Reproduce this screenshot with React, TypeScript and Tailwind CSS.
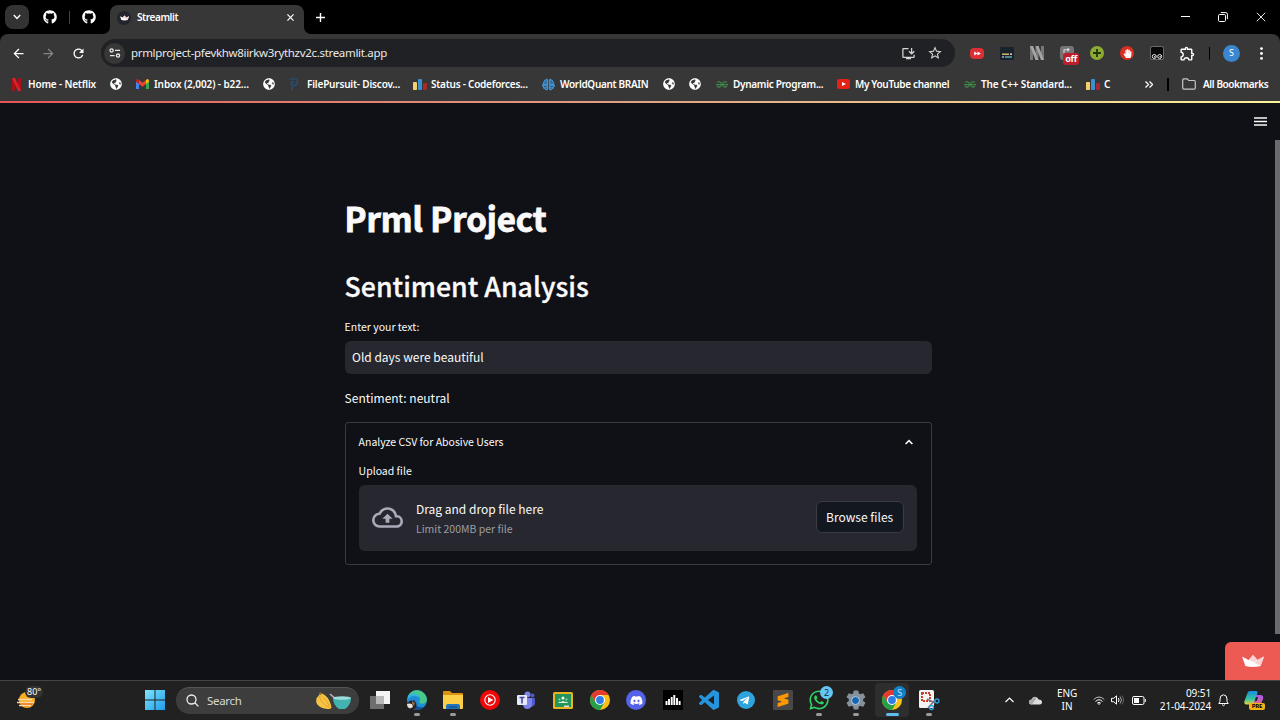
import React from "react";
import { FaGithub, FaDiscord, FaTelegramPlane, FaWhatsapp, FaGlobeAmericas, FaBrain, FaHandPaper } from "react-icons/fa";
import { BiLogoVisualStudio } from "react-icons/bi";
import { SiSublimetext } from "react-icons/si";
import { MdInstallDesktop, MdStarBorder, MdOutlineExtension, MdOutlineCloudUpload, MdArrowBack, MdArrowForward, MdRefresh, MdSettings } from "react-icons/md";

type Kids = { children?: React.ReactNode };

const Crown = ({ className }: { className: string }) => (
  <svg viewBox="0 0 22 12" className={className}>
    <path d="M0 1.6 6.6 5 11 0l4.4 5L22 1.6 18.6 11q-7.6 2-15.2 0z" fill="#fff" />
    <path d="M11 0l4.4 5-2.6 2.6L7 5z" fill="#fbd3d3" />
    <path d="M22 1.6 15.4 5 13 8l5.6 3z" fill="#fbd3d3" />
  </svg>
);

const Bars = () => (
  <svg viewBox="0 0 14 12" className="h-3 w-[14px]">
    <rect x="0" y="4" width="4" height="8" rx=".8" fill="#f6cf6b" />
    <rect x="5" y="1" width="4" height="11" rx=".8" fill="#3a8fd0" />
    <rect x="10" y="5" width="4" height="7" rx=".8" fill="#a32b2b" />
  </svg>
);

const Gfg = () => (
  <svg viewBox="0 0 12 7" className="h-[7px] w-3" fill="none" stroke="#3f8a47" strokeWidth="1.1">
    <path d="M0 3.6h12M1 1.4C3 .2 5.4 1 5.4 3.5S3 6.8 1 5.3M11 1.4C9 .2 6.6 1 6.6 3.5S9 6.8 11 5.3" />
  </svg>
);

const Globe = () => <FaGlobeAmericas className="size-3 text-white" />;

const Chrome = () => (
  <svg viewBox="0 0 20 20" className="size-5">
    <circle cx="10" cy="10" r="10" fill="#fbc116" />
    <path d="M1.34 5A10 10 0 0 0 10 20l4.33-7.5L10 10 5.67 12.5z" fill="#269f4b" />
    <path d="M1.34 5A10 10 0 0 1 18.66 5H10L5.67 12.5z" fill="#e33b2e" />
    <circle cx="10" cy="10" r="5" fill="#fff" />
    <circle cx="10" cy="10" r="3.9" fill="#2f7de9" />
  </svg>
);

function Bookmark({ cell, slot, icon, children }: Kids & { cell: string; slot: string; icon: React.ReactNode }) {
  return (
    <div className={"flex h-full shrink-0 items-center " + cell}>
      <span className={"flex shrink-0 items-center " + slot}>{icon}</span>
      <span className="whitespace-pre">{children}</span>
    </div>
  );
}

function TitleBar() {
  return (
    <div className="flex h-[34px] items-center bg-black">
      <div className="ml-[5px] flex size-[24px] items-center justify-center rounded-[8px] bg-[#333]">
        <svg viewBox="0 0 8 6" className="h-[6px] w-2" fill="none" stroke="#fff" strokeWidth="1.4"><path d="m.8 1 3.2 3.4L7.2 1" /></svg>
      </div>
      <FaGithub className="ml-[14px] size-[14px] text-white" />
      <div className="ml-3 h-[13px] w-px bg-[#444]" />
      <FaGithub className="ml-3 size-[14px] text-white" />
      <div className="ml-[7px] flex h-full w-[208px] items-end">
        <svg viewBox="0 0 7 7" className="size-[7px]"><path d="M7 0v7H0a7 7 0 0 0 7-7" fill="#373737" /></svg>
        <div className="flex h-[29px] w-[194px] items-center rounded-t-[8px] bg-[#373737] pb-1">
          <span className="ml-[7px] flex size-[14px] items-center justify-center rounded-full bg-[#22252d]"><Crown className="h-[6px] w-[9px]" /></span>
          <span className="ml-[6px] w-[150px] text-[10px] font-semibold tracking-[-0.4px] text-white">Streamlit</span>
          <svg viewBox="0 0 8 8" className="size-[7px]" stroke="#fff" strokeWidth="1.4"><path d="m.5.5 7 7m0-7-7 7" /></svg>
        </div>
        <svg viewBox="0 0 7 7" className="size-[7px]"><path d="M0 0v7h7a7 7 0 0 1-7-7" fill="#373737" /></svg>
      </div>
      <svg viewBox="0 0 9 9" className="ml-[5px] size-[9px]" stroke="#fff" strokeWidth="1.4"><path d="M4.5 0v9M0 4.5h9" /></svg>
      <div className="ml-auto flex items-center pb-px pr-[14px]">
        <svg viewBox="0 0 9 9" className="size-[9px]" stroke="#fff"><path d="M0 4.5h9" /></svg>
        <svg viewBox="0 0 10 10" className="ml-[28px] size-[10px]" fill="none" stroke="#fff"><rect x=".5" y="2.5" width="7" height="7" rx="1.2" /><path d="M2.8.6h5q1.6 0 1.6 1.6v5" /></svg>
        <svg viewBox="0 0 10 10" className="ml-[28px] size-[10px]" stroke="#fff" strokeWidth=".9"><path d="m.8.8 8.4 8.4m0-8.4L.8 9.2" /></svg>
      </div>
    </div>
  );
}

function Slot({ children }: Kids) {
  return <div className="flex w-[30px] shrink-0 items-center justify-center">{children}</div>;
}

function Toolbar() {
  return (
    <div className="flex h-[38px] items-center rounded-t-[8px] bg-[#373737]">
      <div className="flex w-[101px] items-center pl-[3px] text-white">
        <Slot><MdArrowBack className="size-[15px]" /></Slot>
        <Slot><MdArrowForward className="size-[15px] text-[#858585]" /></Slot>
        <Slot><MdRefresh className="size-[15px]" /></Slot>
      </div>
      <div className="flex h-7 w-[854px] items-center rounded-full bg-[#202124]">
        <div className="ml-[3px] flex size-[21px] items-center justify-center rounded-full bg-[#373737]">
          <svg viewBox="0 0 12 10" className="h-[10px] w-3" fill="none" stroke="#e8e8e8" strokeWidth="1.3">
            <circle cx="2.6" cy="2.4" r="1.6" /><path d="M6 2.4h5M1 7.6h4.6" /><circle cx="9" cy="7.6" r="1.6" />
          </svg>
        </div>
        <span className="ml-[6px] w-[762px] text-[11.5px] tracking-[-0.32px] text-[#e8e8e8]">prmlproject-pfevkhw8iirkw3rythzv2c.streamlit.app</span>
        <span className="flex w-[30px] justify-center"><MdInstallDesktop className="size-[15px] text-[#d5d5d5]" /></span>
        <span className="flex w-[23px] justify-center"><MdStarBorder className="size-[16px] text-[#d5d5d5]" /></span>
      </div>
      <div className="ml-[7px] flex h-full items-center">
        <Slot><span className="flex h-[11px] w-[14px] items-center justify-center rounded-[4px] bg-[#d92f35]"><svg viewBox="0 0 8 6" className="h-[5px] w-[7px]" fill="#fff"><path d="m0 .5 4 2.5-4 2.5zM4 .5 8 3 4 5.5z" /></svg></span></Slot>
        <Slot><svg viewBox="0 0 14 13" className="h-[13px] w-[14px]"><rect width="14" height="13" rx="1" fill="#18232e" /><path d="M2 7.2h7" stroke="#e2c46b" strokeWidth="1.4" /><path d="M10 7.2h2M2 10h2" stroke="#fff" strokeWidth="1.2" /><path d="M5 10h7" stroke="#6ed0d1" strokeWidth="1.2" /></svg></Slot>
        <Slot><svg viewBox="0 0 14 14" className="size-[14px]"><path d="M0 0h3v14H0zM5.5 0h3v14h-3zM11 0h3v14h-3z" fill="#777" /><path d="M0 0h3l5.500 14h-3zM5.500 0h3L14 14h-3z" fill="#a4a4a4" /></svg></Slot>
        <Slot>
          <span className="relative flex size-[14px] items-center justify-center rounded-[3px] bg-[#747474]">
            <svg viewBox="0 0 9 7" className="mb-[5px] h-[6px] w-2" fill="none" stroke="#ddd" strokeWidth="1.2"><path d="M1 6V2h6M5 0l2 2-2 2" /></svg>
            <span className="absolute left-[3px] top-[7px] flex h-[12px] w-4 items-center justify-center rounded-[3px] bg-[#bd1f2a] text-[9px] font-bold tracking-[-0.3px] text-white">off</span>
          </span>
        </Slot>
        <Slot><svg viewBox="0 0 14 14" className="size-[14px]"><circle cx="7" cy="7" r="7" fill="#8dab32" /><path d="M7 3v8M3 7h8" stroke="#24330b" strokeWidth="1.8" /></svg></Slot>
        <Slot><span className="flex size-[14px] items-center justify-center rounded-full bg-[#dd2e22]"><FaHandPaper className="size-[9px] text-white" /></span></Slot>
        <Slot><svg viewBox="0 0 14 14" className="size-[14px]"><rect x=".4" y=".4" width="13.2" height="13.2" rx="2" fill="#080808" stroke="#8a8a8a" strokeWidth=".8" /><g fill="none" stroke="#fff" strokeWidth=".9"><circle cx="4.3" cy="10.5" r="2" /><circle cx="9.7" cy="10.5" r="2" /></g><circle cx="4.7" cy="10.7" r=".7" fill="#fff" /><circle cx="10.1" cy="10.7" r=".7" fill="#fff" /></svg></Slot>
        <Slot><svg viewBox="0 0 24 24" className="size-[17px] text-white"><MdOutlineExtension size={24} /></svg></Slot>
        <div className="ml-[7px] h-[13px] w-px bg-black" />
        <div className="ml-[13px] flex size-[17px] items-center justify-center rounded-full bg-[#3b86d1] text-[9px] text-white">S</div>
        <svg viewBox="0 0 3 13" className="ml-[20px] h-[13px] w-[3px]" fill="#fff"><circle cx="1.5" cy="1.6" r="1.4" /><circle cx="1.5" cy="6.5" r="1.4" /><circle cx="1.5" cy="11.4" r="1.4" /></svg>
      </div>
    </div>
  );
}

function Bookmarks() {
  return (
    <div className="flex h-[29px] items-center bg-[#373737] pb-[5px] pl-3 text-[10px] font-semibold tracking-[-0.24px] text-white">
      <Bookmark cell="w-[98px]" slot="w-[16px]" icon={<svg viewBox="0 0 9 13" className="h-[13px] w-[9px]"><path d="M0 0h3v13H0zM6 0h3v13H6z" fill="#a9121a" /><path d="M0 0h3l6 13H6z" fill="#e02028" /></svg>}><span className="tracking-[-0.17px]">Home - Netflix</span></Bookmark>
      <Bookmark cell="w-[26px]" slot="w-3" icon={<Globe />} />
      <Bookmark cell="w-[127px]" slot="w-[18px]" icon={<svg viewBox="0 0 13 10" className="h-[10px] w-[13px]"><path d="M0 2v8h3V4z" fill="#4285f4" /><path d="M13 2v8h-3V4z" fill="#34a853" /><path d="M3 1v4l3.5 2.7L10 5V1L6.5 3.7z" fill="#ea4335" /><path d="M0 1.8Q0 0 1.8.1L3 1v4L0 2.8z" fill="#c5221f" /><path d="M13 1.8Q13 0 11.2.1L10 1v4l3-2.2z" fill="#fbbc04" /></svg>}><span className="tracking-[-0.1px]">Inbox (2,002) - b22...</span></Bookmark>
      <Bookmark cell="w-[26px]" slot="w-3" icon={<Globe />} />
      <Bookmark cell="w-[124px]" slot="w-[18px]" icon={<svg viewBox="0 0 10 13" className="h-[13px] w-[10px]" fill="none" stroke="#1f5688" strokeWidth="1.2"><path d="M0 1h6q3 .4 2.5 3.2T5 7.5H3.5l-1 5M1.5 4H6M2 7l1-3" /></svg>}><span className="tracking-[-0.19px]">FilePursuit- Discov...</span></Bookmark>
      <Bookmark cell="w-[129px]" slot="w-[18px]" icon={<Bars />}>Status - Codeforces...</Bookmark>
      <Bookmark cell="w-[121px]" slot="w-[18px]" icon={<span className="relative flex"><FaBrain className="size-[13px] text-[#3d92d3]" /><svg viewBox="0 0 13 13" className="absolute inset-0 size-[13px]" fill="none" stroke="#373737" strokeWidth=".7"><path d="M2 5h2.500M2 8.500h2l1-1M4 2.500v2M11 5H8.500M11 8.500H9l-1-1M9 2.500v2M4 11V9.500M9 11V9.500" /></svg></span>}><span className="tracking-[-0.32px]">WorldQuant BRAIN</span></Bookmark>
      <Bookmark cell="w-[26px]" slot="w-3" icon={<Globe />} />
      <Bookmark cell="w-[27px]" slot="w-3" icon={<Globe />} />
      <Bookmark cell="w-[121px]" slot="w-[17px]" icon={<Gfg />}><span className="tracking-[-0.3px]">Dynamic Program...</span></Bookmark>
      <Bookmark cell="w-[127px]" slot="w-[18px]" icon={<svg viewBox="0 0 13 10" className="h-[10px] w-[13px]"><rect width="13" height="10" rx="2.5" fill="#e62117" /><path d="m5 3 4 2-4 2z" fill="#fff" /></svg>}><span className="tracking-[-0.34px]">My YouTube channel</span></Bookmark>
      <Bookmark cell="w-[122px]" slot="w-[17px]" icon={<Gfg />}><span className="tracking-[-0.14px]">The C++ Standard...</span></Bookmark>
      <Bookmark cell="w-[59px]" slot="w-[18px]" icon={<Bars />}>C</Bookmark>
      <svg viewBox="0 0 8 7" className="h-[7px] w-2" fill="none" stroke="#fff" strokeWidth="1.3"><path d="m.5.5 3 3-3 3m4-6 3 3-3 3" /></svg>
      <div className="ml-[14px] h-[13px] w-[2px] bg-black" />
      <svg viewBox="0 0 14 12" className="ml-[13px] h-3 w-[14px]" fill="none" stroke="#c8c8c8" strokeWidth="1.2"><path d="M.7 10V2Q.7.8 1.9.8h3.3l1.5 1.7h5.400q1.200 0 1.200 1.200V10q0 1.200-1.200 1.200H1.900Q.7 11.200.7 10z" /></svg>
      <span className="ml-[7px] whitespace-pre tracking-[-0.4px]">All Bookmarks</span>
    </div>
  );
}

function StreamlitPage() {
  return (
    <main className="relative flex h-[577px] flex-col bg-[#101116] font-['Noto_Sans_CJK_SC','Noto_Sans_CJK_JP',sans-serif] text-[#fafafa]">
      <div className="flex h-[37px] items-center justify-end pr-[13px]">
        <svg viewBox="0 0 13 9" className="h-[9px] w-[13px]" stroke="#fafafa" strokeWidth="1.3"><path d="M0 1h13M0 4.5h13M0 8h13" /></svg>
      </div>
      <div className="ml-[344.6px] w-[587px] pt-[58px]">
        <h1 className="h-[40px] text-[33px] font-bold leading-[40px] tracking-[-0.08px] [-webkit-text-stroke:0.9px_#fafafa]">Prml Project</h1>
        <h2 className="mt-[28px] h-[40px] text-[26.7px] font-medium leading-[40px] [-webkit-text-stroke:0.3px_#fafafa]">Sentiment Analysis</h2>
        <div className="mt-[13px] h-[17px] text-[10.5px] leading-[16px]">Enter your text:</div>
        <div className="mt-[5px] flex h-[33px] items-center rounded-[6px] bg-[#27282f] pb-px pl-[7.4px] text-[12px]">Old days were beautiful</div>
        <p className="mt-[14px] h-5 text-[12px] leading-5">Sentiment: neutral</p>
        <section className="mt-[14px] h-[143px] rounded-[3px] border border-[#3a3b40] px-[13px]">
          <div className="flex h-[39px] items-center justify-between pb-[2px] text-[10.5px]">
            <span>Analyze CSV for Abosive Users</span>
            <svg viewBox="0 0 8 6" className="mr-[5px] h-[6px] w-2" fill="none" stroke="#fff" strokeWidth="1.5"><path d="M.6 5 4 1.6 7.4 5" /></svg>
          </div>
          <div className="mt-[1px] h-[17px] text-[10.5px] leading-[16px]">Upload file</div>
          <div className="mr-[0.6px] mt-[5px] flex h-[66px] items-center rounded-[6px] bg-[#27282f] px-[13px] pb-[2px]">
            <MdOutlineCloudUpload className="size-[31px] text-[#a9abb8]" />
            <div className="ml-[13.4px] grow pt-[3px]">
              <div className="h-5 text-[12px] leading-5">Drag and drop file here</div>
              <div className="h-5 text-[10.5px] leading-[20px] text-[#9c9da2]">Limit 200MB per file</div>
            </div>
            <button className="mr-[0.4px] h-8 w-[88px] rounded-[6px] border border-[#3a3b43] bg-[#131720] text-[12px]">Browse files</button>
          </div>
        </section>
      </div>
      <div className="absolute right-0 top-[37px] h-[494px] w-[5px] bg-[#6a6b6e]" />
      <div className="absolute bottom-0 right-0 flex h-[38px] w-[55px] items-center justify-center rounded-tl-[6px] bg-[#ec5a53]"><Crown className="h-3 w-[22px]" /></div>
    </main>
  );
}

function TaskIcon({ children, state }: Kids & { state?: "open" | "active" }) {
  return (
    <div className="relative flex h-full w-[36.6px] shrink-0 items-center justify-center">
      {state === "active" && <span className="absolute h-[34px] w-[34px] rounded-[4px] bg-[#2e2e2e]" />}
      <span className="relative flex size-5 items-center justify-center">{children}</span>
      {state === "open" && <span className="absolute bottom-[3px] h-[3px] w-[6px] rounded-full bg-[#9a9a9a]" />}
      {state === "active" && <span className="absolute bottom-[3px] h-[3px] w-[13px] rounded-full bg-[#60bdf0]" />}
    </div>
  );
}

function Taskbar() {
  return (
    <footer className="flex h-10 items-center border-t border-[#444] bg-[#212121] pb-px text-white">
      <div className="relative ml-[17px] size-5">
        <svg viewBox="0 0 20 20" className="size-5"><circle cx="10" cy="10" r="8" fill="#f9ad22" /><path d="M3 13a8 8 0 0 0 14-1z" fill="#e8700f" /><path d="M1 9.5h14M0 12.5h17M2 15.5h12" stroke="#f7d9a4" strokeWidth="1.4" /></svg>
        <span className="absolute left-[8px] top-[-4px] rounded-full bg-[#333] px-[2px] text-[9px] leading-3">80°</span>
      </div>
      <svg viewBox="0 0 20 20" className="ml-[108px] size-5">
        <defs><linearGradient id="win" x1="0" y1="0" x2="1" y2="1"><stop stopColor="#7ce5fb" /><stop offset="1" stopColor="#1f9bea" /></linearGradient></defs>
        <path d="M0 0h9.500v9.500H0zM10.500 0H20v9.500h-9.500zM0 10.500h9.500V20H0zM10.500 10.500H20V20h-9.500z" fill="url(#win)" />
      </svg>
      <div className="ml-[11px] flex h-[27px] w-[183px] items-center rounded-full border-t border-[#555] bg-[#3d3d3d]">
        <svg viewBox="0 0 13 13" className="ml-[10px] size-[13px]" fill="none" stroke="#eee" strokeWidth="1.3"><circle cx="5.5" cy="5.5" r="4.5" /><path d="m8.800 8.800 3.600 3.600" /></svg>
        <span className="ml-2 w-[108px] text-[11.5px] tracking-[-0.3px] text-[#d8d8d8]">Search</span>
        <svg viewBox="0 0 37 18" className="h-[18px] w-[37px]">
          <path d="M5 .5 7 1.500Q12 4 14 8q2 4 2.500 7.500-1 2-4 1.500Q5 16.500 2 12-.5 7 4.200 3z" fill="#f6c445" />
          <path d="M4.500 4Q5 10 14.500 16M6 3.500q5.500 3.500 9 11.500" fill="none" stroke="#dd9a2a" strokeWidth=".8" /><path d="m4.500.4 2.600.8L6 3 4 2.600z" fill="#8f6a25" />
          <path d="m15 2 7 6" stroke="#bfb6c8" strokeWidth="1.5" /><path d="M18 6h18q0 7-6 11h-6q-6-4-6-11" fill="#42b3b0" /><ellipse cx="27" cy="6" rx="9" ry="1.8" fill="#9bdedb" />
        </svg>
      </div>
      <nav className="ml-[2.7px] flex h-full items-center">
        <TaskIcon><svg viewBox="0 0 20 20" className="size-5"><path d="M6 1h14v13H6z" fill="#f3f3f3" /><path d="M0 6h14v13H0z" fill="#777" opacity=".9" /><path d="M6 6h8v8H6z" fill="#b8b8b8" /></svg></TaskIcon>
        <TaskIcon state="open"><svg viewBox="0 0 20 20" className="size-5"><circle cx="10" cy="10" r="10" fill="#1f8fd5" /><path d="M1 6A10 10 0 0 1 20 10q-1 4-6 3.600-3-.6-1-3Q14 6 8 4.500 4 4 1 6" fill="#48c98a" /><path d="M1 6Q4 2 9 4q5 2 4 6 0-4-6-4Q2 6 0 11z" fill="#36b5dc" /><path d="M8 9q-2 6 4 8 4 1 6-1-4 5-10 4-5-2-4-7z" fill="#174f94" /><circle cx="5" cy="15" r="4.500" fill="#29231f" /><path d="M0 14q2-1 5 0l1 3-3 1.500q-3-1-3-4.500" fill="#e9e2db" /><path d="m5 11 3 2-1 3-2-2z" fill="#8c6a52" /></svg></TaskIcon>
        <TaskIcon state="open"><svg viewBox="0 0 20 18" className="h-[18px] w-5"><path d="M0 1q0-1 1-1h6l2 2h10q1 0 1 1v4H0z" fill="#d9930f" /><path d="M0 4h20v13q0 1-1 1H1q-1 0-1-1z" fill="#fccf49" /><path d="M3 18v-3q0-2 2-2h10q2 0 2 2v3z" fill="#1c75bd" /><path d="M6 16h8" stroke="#0c477a" /></svg></TaskIcon>
        <TaskIcon><svg viewBox="0 0 20 20" className="size-5"><circle cx="10" cy="10" r="10" fill="#f00808" /><circle cx="10" cy="10" r="5.200" fill="none" stroke="#fff" strokeWidth="1.1" /><path d="m8 6.900 5.300 3.100L8 13.100z" fill="#fff" /></svg></TaskIcon>
        <TaskIcon><svg viewBox="0 0 20 20" className="size-5"><circle cx="16.500" cy="5.500" r="2" fill="#5059c9" /><circle cx="11.500" cy="4.500" r="3" fill="#7b83eb" /><path d="M13 8h6v6q-1 3-5 3z" fill="#5059c9" /><path d="M7 8h9v7q-1 4-5 4-3 0-4-4z" fill="#7b83eb" /><rect x="1" y="5" width="10" height="10" rx="1" fill="#e8e9fb" /><path d="M3.500 7.500h5M6 7.500v6" stroke="#4045a0" strokeWidth="1.600" /></svg></TaskIcon>
        <TaskIcon><svg viewBox="0 0 20 17" className="h-[17px] w-5"><rect width="20" height="17" rx="1.500" fill="#eab321" /><path d="M2 2h16v13H2z" fill="#22965a" /><circle cx="10" cy="6" r="1.500" fill="#fff" /><circle cx="6.500" cy="7.500" r="1" fill="#9fd3b5" /><circle cx="13.500" cy="7.500" r="1" fill="#9fd3b5" /><path d="M5 11q1.500-2 3-1 2-2 4 0 2-1 3 1z" fill="#d8eee1" /><path d="M11 13.500h5V15h-5z" fill="#ddd" /></svg></TaskIcon>
        <TaskIcon><Chrome /></TaskIcon>
        <TaskIcon><span className="flex size-5 items-center justify-center rounded-full bg-[#5562ea]"><FaDiscord className="size-[13px]" /></span></TaskIcon>
        <TaskIcon><svg viewBox="0 0 20 20" className="size-5"><path d="M0 0h20v20H0z" fill="#000" /><path d="M3.500 15v-4M6 15V9M8.700 15V7M11.300 15V5M14 15V8M16.600 15v-4" stroke="#fff" strokeWidth="1.900" /></svg></TaskIcon>
        <TaskIcon><BiLogoVisualStudio className="size-[24px] shrink-0 text-[#2694dc]" /></TaskIcon>
        <TaskIcon><span className="flex size-[18px] items-center justify-center rounded-full bg-[#2fa3dc]"><FaTelegramPlane className="mr-[2px] size-[11px]" /></span></TaskIcon>
        <TaskIcon><span className="flex size-5 items-center justify-center rounded-[1px] bg-[#484848]"><SiSublimetext className="size-[14px] text-[#ff9800]" /></span></TaskIcon>
        <TaskIcon state="open"><FaWhatsapp className="size-[22px] shrink-0 text-[#2fd467]" /><span className="absolute left-[11px] top-[-4px] flex size-[13px] items-center justify-center rounded-full bg-[#65c5f4] text-[9px] text-[#12303f]">2</span></TaskIcon>
        <TaskIcon state="open"><MdSettings className="size-[24px] shrink-0 text-[#87919a]" /><span className="absolute size-[9px] rounded-full border border-[#b9d2e8] bg-[#1764b1]" /></TaskIcon>
        <TaskIcon state="active"><Chrome /><span className="absolute left-[11px] top-[-4px] flex size-[13px] items-center justify-center rounded-full bg-[#1381c8] text-[9px] text-[#c5e5fa]">S</span></TaskIcon>
        <TaskIcon state="open"><svg viewBox="0 0 20 20" className="size-5 overflow-visible"><rect width="15" height="18" rx="1.500" fill="#f2f2f2" /><path d="M3 3h8v8H3z" fill="none" stroke="#c9402c" strokeWidth="2" strokeDasharray="2 1" /><path d="m8 9 8 4M9 18l7-8" stroke="#778" strokeWidth="1.500" /><g fill="none" stroke="#2aa0dd" strokeWidth="1.300"><circle cx="18" cy="11" r="2" /><circle cx="12.500" cy="17.500" r="2" /></g></svg></TaskIcon>
      </nav>
      <div className="ml-auto flex h-full items-center text-[10px] leading-[13px] tracking-[-0.1px]">
        <svg viewBox="0 0 9 6" className="h-[6px] w-[9px]" fill="none" stroke="#fff" strokeWidth="1.2"><path d="m.5 5 4-4 4 4" /></svg>
        <svg viewBox="0 0 13 9" className="ml-[15px] h-[9px] w-[13px]"><path d="M2.500 8.500a2.500 2.500 0 0 1 0-5Q4 0 7 1q2 .5 2.500 2.500 3.500 0 3.500 2.500t-2.500 2.500z" fill="#ddd" /><path d="M0 6q.5-2.500 3-2.500Q5 0 8 1.500L3 8.500Q0 8.500 0 6" fill="#aaa" /></svg>
        <div className="ml-[10px] w-[30px] text-center">ENG<br />IN</div>
        <svg viewBox="0 0 12 9" className="ml-[11px] h-[9px] w-3" fill="none" stroke="#fff"><path d="M.7 3.500q5.300-5 10.600 0" opacity=".7" /><path d="M2.500 5.500q3.500-3.500 7 0M4.200 7.200q1.800-1.800 3.600 0" /><circle cx="6" cy="8" r=".8" fill="#fff" stroke="none" /></svg>
        <svg viewBox="0 0 13 10" className="ml-[6px] h-[10px] w-[13px]" fill="none" stroke="#fff"><path d="M.5 3.300h2.200L5.500.8v8.400L2.700 6.700H.5zM7.300 3q1.600 2 0 4" /><path d="M9 1.500q3 3.500 0 7" opacity=".6" /><path d="M10.800.5q3.400 4.500 0 9" opacity=".3" /></svg>
        <svg viewBox="0 0 14 9" className="ml-[8px] h-[9px] w-[14px]"><rect x=".5" y=".5" width="11.500" height="8" rx="1.500" fill="none" stroke="#fff" /><path d="M2 2h5v5H2z" fill="#fff" /><path d="M13.300 3v3" stroke="#fff" /></svg>
        <div className="ml-[11px] w-[54px] whitespace-nowrap text-right">09:51<br />21-04-2024</div>
        <svg viewBox="0 0 11 13" className="ml-[7px] h-[13px] w-[11px]" fill="none" stroke="#fff"><path d="M.8 9.500 2 7.500V5q0-4 3.500-4.200Q9 1 9 5v2.500l1.200 2zM4 10.500q1.500 2.400 3 0" /></svg>
        <div className="relative ml-[15px] mr-[16px] h-5 w-5">
          <svg viewBox="0 0 20 20" className="size-5">
            <defs><linearGradient id="cpa" x1="0" y1="0" x2="0" y2="1"><stop stopColor="#1a8be3" /><stop offset=".6" stopColor="#35c6a0" /><stop offset="1" stopColor="#e8d33e" /></linearGradient><linearGradient id="cpb" x1="0" y1="0" x2="0" y2="1"><stop stopColor="#a15df0" /><stop offset="1" stopColor="#f0627e" /></linearGradient></defs>
            <path d="M6 1h6q2 0 1.500 2L10 13q-.6 1.500-2 1.500H2Q-.5 14 .5 11L3.500 3Q4 1 6 1" fill="url(#cpa)" /><path d="M12 5h5q3 .5 2 4l-2 5q-.6 2-3 2H8q1 0 1.800-2z" fill="url(#cpb)" /><path d="m12 7-1.200 4h2L14 7z" fill="#212121" />
          </svg>
          <span className="absolute left-[5px] top-[13px] flex h-[7px] w-4 items-center justify-center rounded-[2px] bg-[#f4b31a] text-[6px] font-bold text-black">PRE</span>
        </div>
      </div>
    </footer>
  );
}

export default function App() {
  return (
    <div className="flex h-[720px] w-[1280px] flex-col overflow-hidden bg-black font-['Noto_Sans','Open_Sans',sans-serif]">
      <TitleBar />
      <Toolbar />
      <Bookmarks />
      <div className="h-[2px] bg-linear-to-r from-[#e4555a] via-[#e0a283] to-[#fbf39a]" />
      <StreamlitPage />
      <Taskbar />
    </div>
  );
}
